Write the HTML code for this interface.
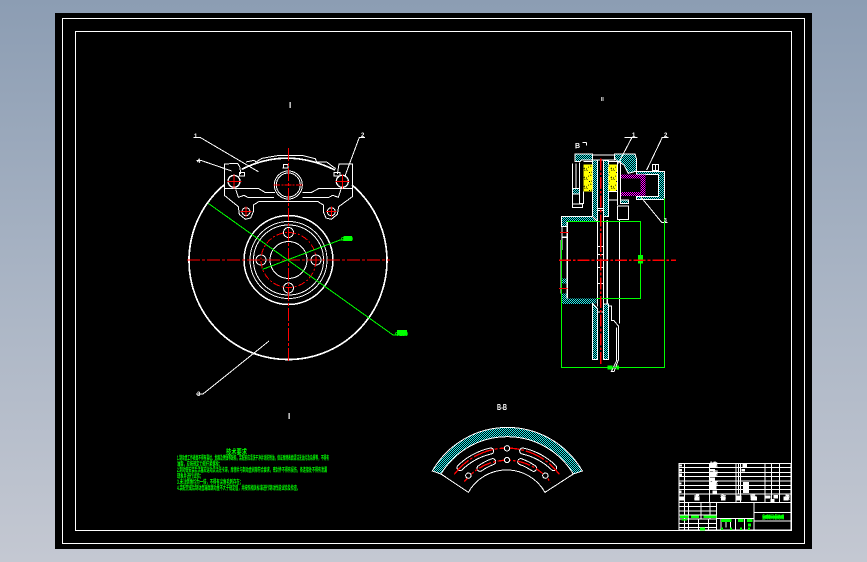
<!DOCTYPE html>
<html lang="zh">
<head>
<meta charset="utf-8">
<title>CAD drawing</title>
<style>
html,body{margin:0;padding:0;width:867px;height:562px;overflow:hidden;background:linear-gradient(180deg,#8c9db3 0%,#a9b4c4 50%,#c4c8d2 100%);}
svg{position:absolute;left:0;top:0;display:block;}
text{font-family:"Liberation Sans","Noto Sans CJK SC",sans-serif;font-weight:bold;}
</style>
</head>
<body>
<svg width="867" height="562" viewBox="0 0 867 562" xmlns="http://www.w3.org/2000/svg" shape-rendering="crispEdges">
<defs>
<pattern id="h" width="6" height="6" patternUnits="userSpaceOnUse">
<rect width="6" height="6" fill="#000"/><rect width="3" height="3" fill="#22eeee"/><rect x="3" y="3" width="3" height="3" fill="#22eeee"/>
</pattern>
<pattern id="hz" width="6" height="6" patternUnits="userSpaceOnUse">
<rect width="6" height="6" fill="#000"/><rect width="3" height="3" fill="#22eeee"/><rect x="3" y="3" width="3" height="3" fill="#22eeee"/>
</pattern>
<pattern id="y" width="27" height="27" patternUnits="userSpaceOnUse">
<rect width="27" height="27" fill="#ff0"/><path d="M0 13L13 2L26 13L13 25Z" fill="none" stroke="#000" stroke-width="3" stroke-dasharray="3 6"/>
</pattern>
<pattern id="m" width="6" height="6" patternUnits="userSpaceOnUse">
<rect width="6" height="6" fill="#000"/><rect width="3" height="3" fill="#f0f"/><rect x="3" y="3" width="3" height="3" fill="#f0f"/>
</pattern>
</defs>

<rect x="55" y="13" width="757" height="536" fill="#000"/>
<rect x="62.5" y="18.5" width="742" height="525" fill="none" stroke="#fff"/>
<rect x="75.5" y="31.5" width="716" height="499" fill="none" stroke="#fff"/>

<!-- front view -->
<g fill="none" stroke="#fff">
<path d="M224 185A99 99 0 1 0 352 185" stroke-width="1.700"/>
<circle cx="288.500" cy="260" r="44.500" stroke-width="1.500"/>
<circle cx="288.500" cy="260" r="38.500"/>
<circle cx="288.500" cy="260" r="35"/>
<circle cx="288.500" cy="260" r="18.500"/>
<circle cx="261" cy="260" r="5"/><circle cx="316" cy="260" r="5"/><circle cx="288.500" cy="232.500" r="5"/><circle cx="288.500" cy="288" r="5"/>
</g>
<circle cx="288.500" cy="260" r="27.500" fill="none" stroke="#f00" stroke-dasharray="7 2 2 2"/>

<g transform="translate(170 90) scale(.33333)" fill="none" stroke="#fff" stroke-width="3">
<path d="M163 288V222L203 220L210 232L212 252"/>
<path d="M163 288V316L205 350L208 373L226 388L242 384L250 365V345L266 335H444L460 345V365L468 384L484 388L502 373L506 350L547 320V222H507L502 252"/>
<path d="M215 238Q350 170 495 240" stroke-width="5"/>
<path d="M228 216L252 211L258 216L276 205L322 197H400L436 206L440 216H470L497 236"/>
<path d="M163 295H265L285 307H315"/>
<path d="M547 295H447L425 307H398"/>
<path d="M197 298L205 322L222 316L235 323H312"/>
<path d="M513 298L505 322L488 316L475 323H398"/>
<circle cx="355" cy="285" r="42"/><circle cx="355" cy="285" r="36"/>
<path d="M338 234H354V224H340V234"/>
<circle cx="192" cy="274" r="18" stroke-width="4"/><circle cx="517" cy="274" r="18" stroke-width="4"/>
<path d="M208 258H224V248H208Z"/><path d="M492 258H510V248H492Z"/>
<circle cx="228" cy="365" r="12"/><circle cx="484" cy="365" r="12"/>
<path d="M70 142H90L265 245"/>
<path d="M80 212H95L185 243"/>
<path d="M585 142H568L525 258"/>
<g stroke="#f00" stroke-width="3">
<path d="M172 274H214M192 254V296M497 274H538M517 254V296M212 365H244M228 350V381M468 365H500M484 350V381"/>
<path d="M310 285H398" stroke-dasharray="20 4 6 4"/>
</g>
</g>
<path d="M288.500 148V361" stroke="#f00" stroke-width="1.200" stroke-dasharray="13 2 3 2" fill="none"/>
<path d="M187 260H390" stroke="#f00" stroke-width="1.200" stroke-dasharray="13 2 3 2" fill="none"/>
<path d="M196 394H203L269 341" stroke="#fff" fill="none"/>
<path d="M208.500 203.500L393 335H407" stroke="#0f0" fill="none"/>
<path d="M262.700 269.300L340 240H346" stroke="#0f0" fill="none"/>
<rect x="344" y="236" width="8" height="5" fill="#0f0"/>
<rect x="397" y="330" width="10" height="5" fill="#0f0"/>
<text x="341" y="241" font-size="6" fill="#0f0" textLength="12">Φ90</text>
<text x="395" y="336" font-size="6" fill="#0f0" textLength="13">Φ280</text>
<g fill="#fff" font-size="8">
<text x="289" y="108" textLength="6">I</text>
<text x="288" y="419" textLength="6">I</text>
</g>
<g fill="#fff" font-size="6">
<text x="194" y="138">1</text><text x="197" y="163">4</text><text x="361" y="137">2</text><text x="197" y="396">3</text><text x="601" y="101" font-size="5">II</text>
</g>

<!-- section view -->
<g transform="translate(550 120) scale(.33333)" stroke="#fff" stroke-width="3" fill="none">
<path d="M75 102H128V120H95L90 125H75Z" fill="url(#h)"/>
<rect x="128" y="120" width="15" height="180" fill="url(#h)"/>
<rect x="160" y="122" width="16" height="168" fill="url(#h)"/>
<path d="M193 102H255L260 118V153L235 160L222 135L195 118Z" fill="url(#h)"/>
<path d="M260 155H343V238H260V229H325V163H260Z" fill="url(#h)"/>
<rect x="68" y="205" width="20" height="17" fill="url(#h)"/>
<path d="M35 290H128L142 305H52L50 320H35Z" fill="url(#h)"/>
<rect x="212" y="240" width="23" height="11" fill="url(#h)"/>
<rect x="100" y="133" width="27" height="82" fill="url(#y)" stroke="none"/>
<rect x="175" y="133" width="28" height="82" fill="url(#y)" stroke="none"/>
<path d="M212 163H287V228H212V216H272V175H212Z" fill="url(#m)" stroke="none"/>
<path d="M128 105H193V120H128"/>
<path d="M68 130V262H98V252H68M68 222V252M78 130V205M88 128V250H100V215M100 125H127M176 125H212V252M203 125V255M176 240H203M176 215H203"/>
<path d="M202 258H236V298H202ZM208 298V390"/>
<path d="M142 300V390M160 290V390"/>
<path d="M172 300V390" stroke-width="5"/>
<path d="M143 265H160M143 272H160"/>
<path d="M36 320V390M52 305V390M36 352H50" stroke-width="4"/>
<path d="M224 52H262M246 52L205 130M335 52H355M337 52L290 150M270 228L335 307H352"/>
<path d="M110 68H98M110 68V76M78 72V86"/>
<path d="M308 134H325V152H308ZM316 134V152" stroke="#fff"/>
<path d="M50 304H272V390M343 236V390" stroke="#0f0" stroke-width="3"/>
<path d="M152 115V390" stroke="#f00" stroke-width="4" stroke-dasharray="36 6 8 6"/>
<path d="M30 337H55" stroke="#f00" stroke-width="3"/>
</g>
<g transform="translate(550 240) scale(.33333)" stroke="#fff" stroke-width="3" fill="none">
<path d="M34 160H52V175H140V190H122L120 192H34Z" fill="url(#h)" stroke="none"/>
<path d="M127 190L142 205V358H127Z" fill="url(#h)"/>
<path d="M160 192H176V358H160Z" fill="url(#h)"/>
<rect x="34" y="116" width="18" height="14" fill="url(#h)" stroke="none"/>
<path d="M34 0V160M52 0V175" stroke-width="4"/>
<path d="M142 0V200M160 0V192M208 0V250"/>
<path d="M172 0V190" stroke-width="5"/>
<path d="M142 20H160M142 44H160M142 82H160M142 130H160M142 216H160"/>
<path d="M176 198H185V242H192L205 258V360L192 395H184L200 362V262"/>
<path d="M34 0V382H343V0M271 0V176H140" stroke="#0f0"/>
<rect x="264" y="45" width="15" height="25" fill="#0f0" stroke="none"/>
<rect x="172" y="376" width="15" height="13" fill="#0f0" stroke="none"/>
<rect x="200" y="376" width="7" height="13" fill="#0f0" stroke="none"/>
<path d="M27 61H378" stroke="#f00" stroke-width="3.500" stroke-dasharray="36 6 8 6"/>
<path d="M27 145H52" stroke="#f00"/>
<path d="M152 0V372" stroke="#f00" stroke-width="4" stroke-dasharray="36 6 8 6"/>
</g>
<g fill="#fff" font-size="6"><text x="632" y="137">1</text><text x="664" y="137">2</text><text x="664" y="222" font-size="5">3</text><text x="575" y="148" font-size="7">B</text></g>

<!-- B-B shoe -->
<g transform="translate(425 395) scale(.33333)" fill="none" stroke="#fff" stroke-width="3">
<path d="M22 228A259 259 0 0 1 472 228L445 237A232 232 0 0 0 48 237Z" fill="url(#hz)"/>
<path d="M48 237L130 292A132 132 0 0 1 360 292L445 237"/>
<g stroke="#fff" stroke-width="21" stroke-linecap="round">
<path d="M105 218A197 197 0 0 1 197 168M293 168A197 197 0 0 1 386 218M165 220A161 161 0 0 1 203 200M287 200A161 161 0 0 1 326 220"/>
</g>
<g stroke="#000" stroke-width="15" stroke-linecap="round">
<path d="M105 218A197 197 0 0 1 197 168M293 168A197 197 0 0 1 386 218M165 220A161 161 0 0 1 203 200M287 200A161 161 0 0 1 326 220"/>
</g>
<path d="M88 238A197 197 0 0 1 403 238" stroke="#f00" stroke-width="4" stroke-dasharray="60 6 8 6"/>
<path d="M118 260A161 161 0 0 1 377 262" stroke="#f00" stroke-width="4" stroke-dasharray="40 6 8 6"/>
<g fill="#000"><circle cx="246" cy="160" r="8"/><circle cx="246" cy="195" r="8"/><circle cx="130" cy="242" r="8"/><circle cx="361" cy="242" r="8"/></g>
</g>
<text x="497" y="410" font-size="8" fill="#fff" textLength="10" lengthAdjust="spacingAndGlyphs">B-B</text>

<!-- technical notes -->
<g fill="#0f0" font-size="6">
<text x="226" y="454" font-size="7" textLength="21" lengthAdjust="spacingAndGlyphs">技术要求</text>
<text x="177" y="460" textLength="152" lengthAdjust="spacingAndGlyphs">1.制动盘工作表面不得有裂纹、划痕及锈蚀等缺陷，装配前应清洗干净并涂防锈油，保证摩擦表面清洁无油污及杂质等，不得有</text>
<text x="177" y="466" textLength="45" lengthAdjust="spacingAndGlyphs">油脂，应按规定力矩拧紧螺栓；</text>
<text x="177" y="472" textLength="150" lengthAdjust="spacingAndGlyphs">2.制动钳安装后活塞应运动灵活无卡滞，摩擦片与制动盘间隙符合要求，密封件不得有损伤，各连接处不得有泄漏</text>
<text x="177" y="478" textLength="26" lengthAdjust="spacingAndGlyphs">现象并进行试验；</text>
<text x="177" y="484" textLength="66" lengthAdjust="spacingAndGlyphs">3.未注倒角均为一倍，不得有尖角毛刺存在；</text>
<text x="177" y="490" textLength="123" lengthAdjust="spacingAndGlyphs">4.装配完成后制动盘端面跳动量不大于规定值，并按照相关标准进行制动性能试验及检查。</text>
</g>

<!-- title block -->
<g transform="translate(675 455) scale(.33333)" fill="none" stroke="#fff" stroke-width="3">
<rect x="12" y="25" width="336" height="200"/>
<path d="M12 38H348M12 52H348M12 65H348M12 78H348M12 91H348M12 104H348M12 117H348M12 142H348"/>
<path d="M28 25V142M103 25V142M183 25V142M190 25V117M197 25V142M270 25V142M290 25V142M313 25V142"/>
<path d="M125 142V225M237 142V225M237 172H348M237 198H348M125 190H237"/>
<path d="M12 155H125M12 168H125M12 180H125M12 192H125M12 205H125M12 218H125"/>
<path d="M28 142V225M40 142V225M78 142V190M105 142V190M70 190V225M100 190V225"/>
<path d="M138 190V225M153 190V218M167 190V218M181 190V225M208 190V225"/>
<g fill="#fff" stroke="none">
<rect x="105" y="27" width="20" height="10"/><rect x="105" y="42" width="15" height="8"/><rect x="105" y="53" width="20" height="10"/><rect x="105" y="67" width="15" height="9"/><rect x="105" y="81" width="20" height="9"/><rect x="105" y="93" width="20" height="10"/><rect x="112" y="106" width="14" height="10"/>
<rect x="203" y="27" width="13" height="9"/><rect x="200" y="42" width="10" height="8"/><rect x="204" y="81" width="18" height="33"/>
<rect x="14" y="28" width="7" height="7"/><rect x="14" y="42" width="7" height="7"/><rect x="14" y="55" width="7" height="9"/><rect x="14" y="82" width="5" height="7"/><rect x="14" y="107" width="5" height="7"/>
<rect x="14" y="124" width="14" height="12"/><rect x="58" y="124" width="16" height="12"/><rect x="138" y="124" width="14" height="12"/><rect x="185" y="122" width="14" height="15"/><rect x="228" y="124" width="18" height="12"/><rect x="272" y="122" width="15" height="8"/><rect x="286" y="132" width="13" height="9"/><rect x="295" y="120" width="14" height="10"/><rect x="325" y="124" width="15" height="12"/>
</g>
<g fill="#0f0" stroke="none">
<rect x="15" y="182" width="25" height="7"/><rect x="48" y="182" width="24" height="7"/><rect x="85" y="182" width="40" height="7"/><rect x="20" y="192" width="16" height="5"/>
<rect x="138" y="192" width="32" height="9"/><rect x="189" y="192" width="16" height="9"/><rect x="216" y="192" width="16" height="9"/><rect x="219" y="205" width="9" height="9"/>
<rect x="75" y="218" width="15" height="9"/><rect x="138" y="218" width="6" height="7"/><rect x="165" y="218" width="6" height="7"/><rect x="195" y="218" width="6" height="7"/><rect x="219" y="218" width="6" height="7"/>
<rect x="262" y="182" width="65" height="9"/>
</g>
</g>
<text x="762" y="519" font-size="5.500" fill="#0f0" textLength="22" lengthAdjust="spacingAndGlyphs">盘式制动器总成</text>
<g fill="#fff" font-size="5" lengthAdjust="spacingAndGlyphs">
<text x="710" y="466" textLength="8">制动盘</text><text x="710" y="475" textLength="8">活塞</text><text x="710" y="485" textLength="8">钳体</text>
<text x="694" y="499" textLength="6">序号</text><text x="720" y="499" textLength="6">名称</text><text x="750" y="499" textLength="6">数量</text><text x="785" y="499" textLength="5">备注</text>
</g>
</svg>
</body>
</html>
